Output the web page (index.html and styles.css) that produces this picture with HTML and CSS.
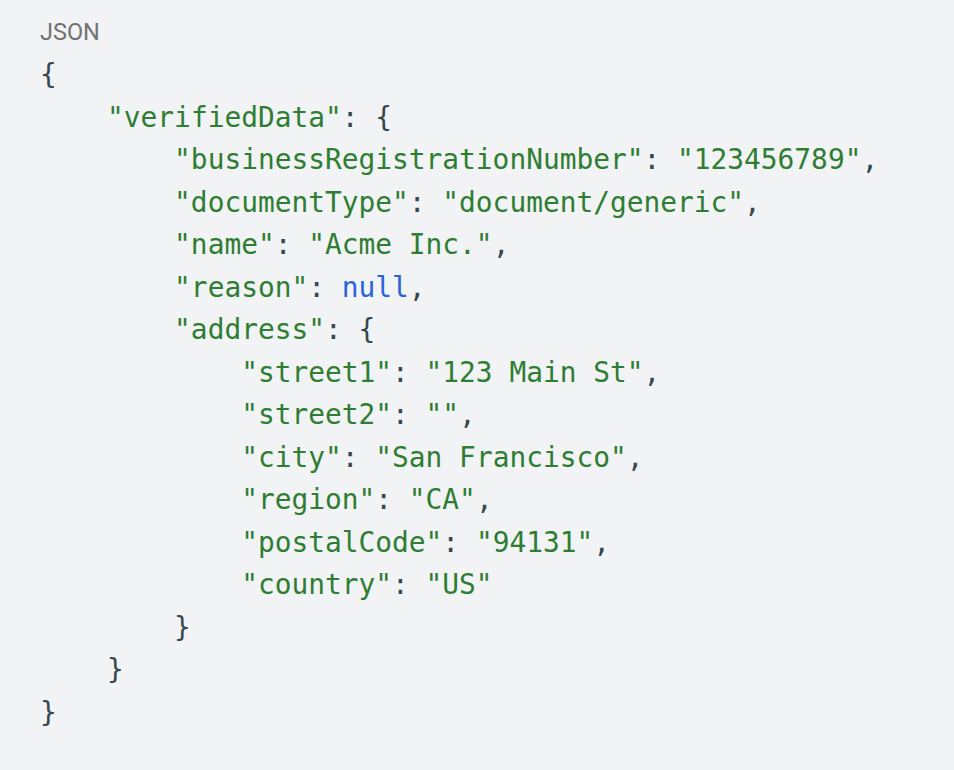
FILE: index.html
```html
<!DOCTYPE html>
<html>
<head>
<meta charset="utf-8">
<link rel="stylesheet" href="styles.css">
</head>
<body>
<div class="block">
<div class="label">JSON</div>
<pre class="code"><span class="p">{</span>
    <span class="s">"verifiedData"</span><span class="p">: {</span>
        <span class="s">"businessRegistrationNumber"</span><span class="p">: </span><span class="s">"123456789"</span><span class="p">,</span>
        <span class="s">"documentType"</span><span class="p">: </span><span class="s">"document/generic"</span><span class="p">,</span>
        <span class="s">"name"</span><span class="p">: </span><span class="s">"Acme Inc."</span><span class="p">,</span>
        <span class="s">"reason"</span><span class="p">: </span><span class="n">null</span><span class="p">,</span>
        <span class="s">"address"</span><span class="p">: {</span>
            <span class="s">"street1"</span><span class="p">: </span><span class="s">"123 Main St"</span><span class="p">,</span>
            <span class="s">"street2"</span><span class="p">: </span><span class="s">""</span><span class="p">,</span>
            <span class="s">"city"</span><span class="p">: </span><span class="s">"San Francisco"</span><span class="p">,</span>
            <span class="s">"region"</span><span class="p">: </span><span class="s">"CA"</span><span class="p">,</span>
            <span class="s">"postalCode"</span><span class="p">: </span><span class="s">"94131"</span><span class="p">,</span>
            <span class="s">"country"</span><span class="p">: </span><span class="s">"US"</span>
        <span class="p">}</span>
    <span class="p">}</span>
<span class="p">}</span></pre>
</div>
</body>
</html>
```
FILE: styles.css
```css
html, body {
  margin: 0;
  padding: 0;
  background: #f1f3f5;
}
.block {
  padding: 13px 40px 20px 40px;
}
.label {
  font-family: Roboto, "Liberation Sans", sans-serif;
  font-size: 23.5px;
  line-height: 38px;
  color: #717171;
}
.code {
  margin: 3px 0 0 0;
  font-family: "DejaVu Sans Mono", "Liberation Mono", monospace;
  font-size: 27.85px;
  line-height: 42.5px;
  color: #37474f;
}
.s { color: #2e7d32; }
.n { color: #2a63d6; }
.p { color: #37474f; }
```
